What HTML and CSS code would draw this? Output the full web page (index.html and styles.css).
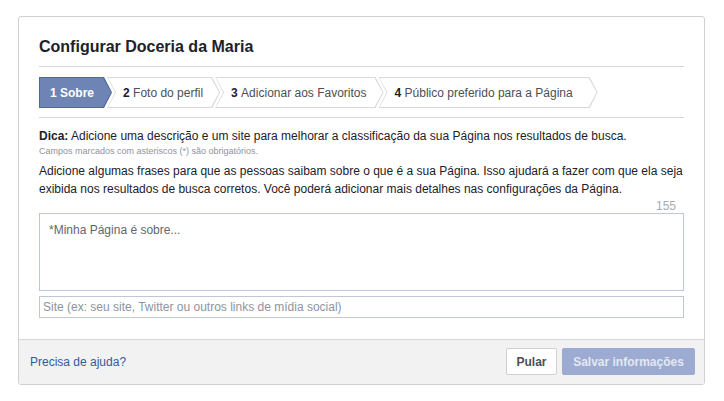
FILE: index.html
```html
<!DOCTYPE html>
<html lang="pt-BR">
<head>
<meta charset="utf-8">
<title>Configurar Doceria da Maria</title>
<link rel="stylesheet" href="styles.css">
</head>
<body>
<div class="card">
  <div class="card-body">
    <h1 class="title">Configurar Doceria da Maria</h1>
    <div class="steps">
      <div class="step step-active step-first"><div class="step-in"><b>1</b>&nbsp;Sobre</div></div>
      <div class="step"><div class="step-in"><b>2</b>&nbsp;Foto do perfil</div></div>
      <div class="step"><div class="step-in"><b>3</b>&nbsp;Adicionar aos Favoritos</div></div>
      <div class="step"><div class="step-in"><b>4</b>&nbsp;Público preferido para a Página</div></div>
    </div>
    <p class="tip"><b>Dica:</b> Adicione uma descrição e um site para melhorar a classificação da sua Página nos resultados de busca.</p>
    <p class="note">Campos marcados com asteriscos (*) são obrigatórios.</p>
    <p class="desc">Adicione algumas frases para que as pessoas saibam sobre o que é a sua Página. Isso ajudará a fazer com que ela seja exibida nos resultados de busca corretos. Você poderá adicionar mais detalhes nas configurações da Página.</p>
    <div class="counter">155</div>
    <textarea class="about" placeholder="*Minha Página é sobre..."></textarea>
    <input class="site" type="text" placeholder="Site (ex: seu site, Twitter ou outros links de mídia social)">
  </div>
  <div class="footer">
    <a class="help" href="#">Precisa de ajuda?</a>
    <div class="actions">
      <button class="btn btn-skip">Pular</button>
      <button class="btn btn-save">Salvar informações</button>
    </div>
  </div>
</div>
</body>
</html>
```

FILE: styles.css
```css
* { box-sizing: border-box; }
html, body { margin: 0; background: #fff; }
body {
  padding: 16px 18px;
  font-family: "Liberation Sans", Arial, Helvetica, sans-serif;
  font-size: 12px;
  color: #1d2129;
}
.card {
  width: 687px;
  border: 1px solid #cdd0d4;
  border-radius: 3px;
  overflow: hidden;
  background: #fff;
}
.card-body {
  padding: 20px 20px 21px 20px;
}
.title {
  margin: 0;
  font-size: 16px;
  line-height: 20px;
  font-weight: bold;
  color: #1d2129;
  padding-bottom: 9px;
  border-bottom: 1px solid #d3d6db;
}
.steps {
  display: flex;
  margin-top: 10px;
  padding-bottom: 9px;
  border-bottom: 1px solid #d3d6db;
}
.step {
  display: flex;
  height: 31px;
  background: #d6d9de;
  margin-left: -5px;
  clip-path: polygon(0 0, calc(100% - 8px) 0, 100% 50%, calc(100% - 8px) 100%, 0 100%, 8px 50%);
}
.step-in {
  display: flex;
  align-items: center;
  margin: 1px;
  flex: 1;
  background: #fff;
  padding: 0 16px 0 15px;
  color: #4b4f56;
  white-space: nowrap;
  clip-path: polygon(0 0, calc(100% - 8px) 0, 100% 50%, calc(100% - 8px) 100%, 0 100%, 8px 50%);
}
.step-in b { color: #1d2129; }
.step-first { margin-left: 0; clip-path: polygon(0 0, calc(100% - 8px) 0, 100% 50%, calc(100% - 8px) 100%, 0 100%); }
.step-first .step-in { clip-path: polygon(0 0, calc(100% - 8px) 0, 100% 50%, calc(100% - 8px) 100%, 0 100%); padding: 0 17px 0 10px; }
.step:last-child .step-in { padding-right: 24px; }
.step-active { background: #4e69a2; }
.step-active .step-in { background: #6d84b4; color: #fff; font-weight: bold; }
.step-active .step-in b { color: #fff; }
.tip {
  margin: 10px 0 0;
  line-height: 16px;
  color: #1d2129;
}
.note {
  margin: 1px 0 0;
  font-size: 9px;
  line-height: 12px;
  color: #90949c;
}
.desc {
  margin: 5px 0 0;
  line-height: 18px;
  color: #1d2129;
}
.counter {
  text-align: right;
  padding-right: 8px;
  color: #a7abb1;
  line-height: 14px;
  margin-top: 1px;
}
.about {
  display: block;
  width: 100%;
  height: 78px;
  margin-top: 0;
  border: 1px solid #bdc7d8;
  padding: 8px 9px;
  font-family: inherit;
  font-size: 12px;
  line-height: 16px;
  resize: none;
  outline: none;
}
.about::placeholder { color: #62676e; }
.site {
  display: block;
  width: 100%;
  height: 22px;
  margin-top: 5px;
  border: 1px solid #bdc7d8;
  padding: 2px 3px;
  font-family: inherit;
  font-size: 12px;
  outline: none;
}
.site::placeholder { color: #8d949e; }
.footer {
  display: flex;
  align-items: center;
  justify-content: space-between;
  background: #f2f2f2;
  border-top: 1px solid #d3d6db;
  padding: 8px 9px 9px 11px;
}
.help {
  color: #365899;
  text-decoration: none;
  font-size: 12px;
}
.actions { display: flex; gap: 5px; }
.btn {
  height: 27px;
  border-radius: 2px;
  font-family: inherit;
  font-size: 12px;
  font-weight: bold;
  padding: 0;
  white-space: nowrap;
  cursor: pointer;
}
.btn-skip {
  width: 51px;
  background: #fff;
  border: 1px solid #ced0d4;
  color: #4b4f56;
}
.btn-save {
  width: 133px;
  background: #9dabd2;
  border: 1px solid #9dabd2;
  color: #e3e8f2;
}
```
